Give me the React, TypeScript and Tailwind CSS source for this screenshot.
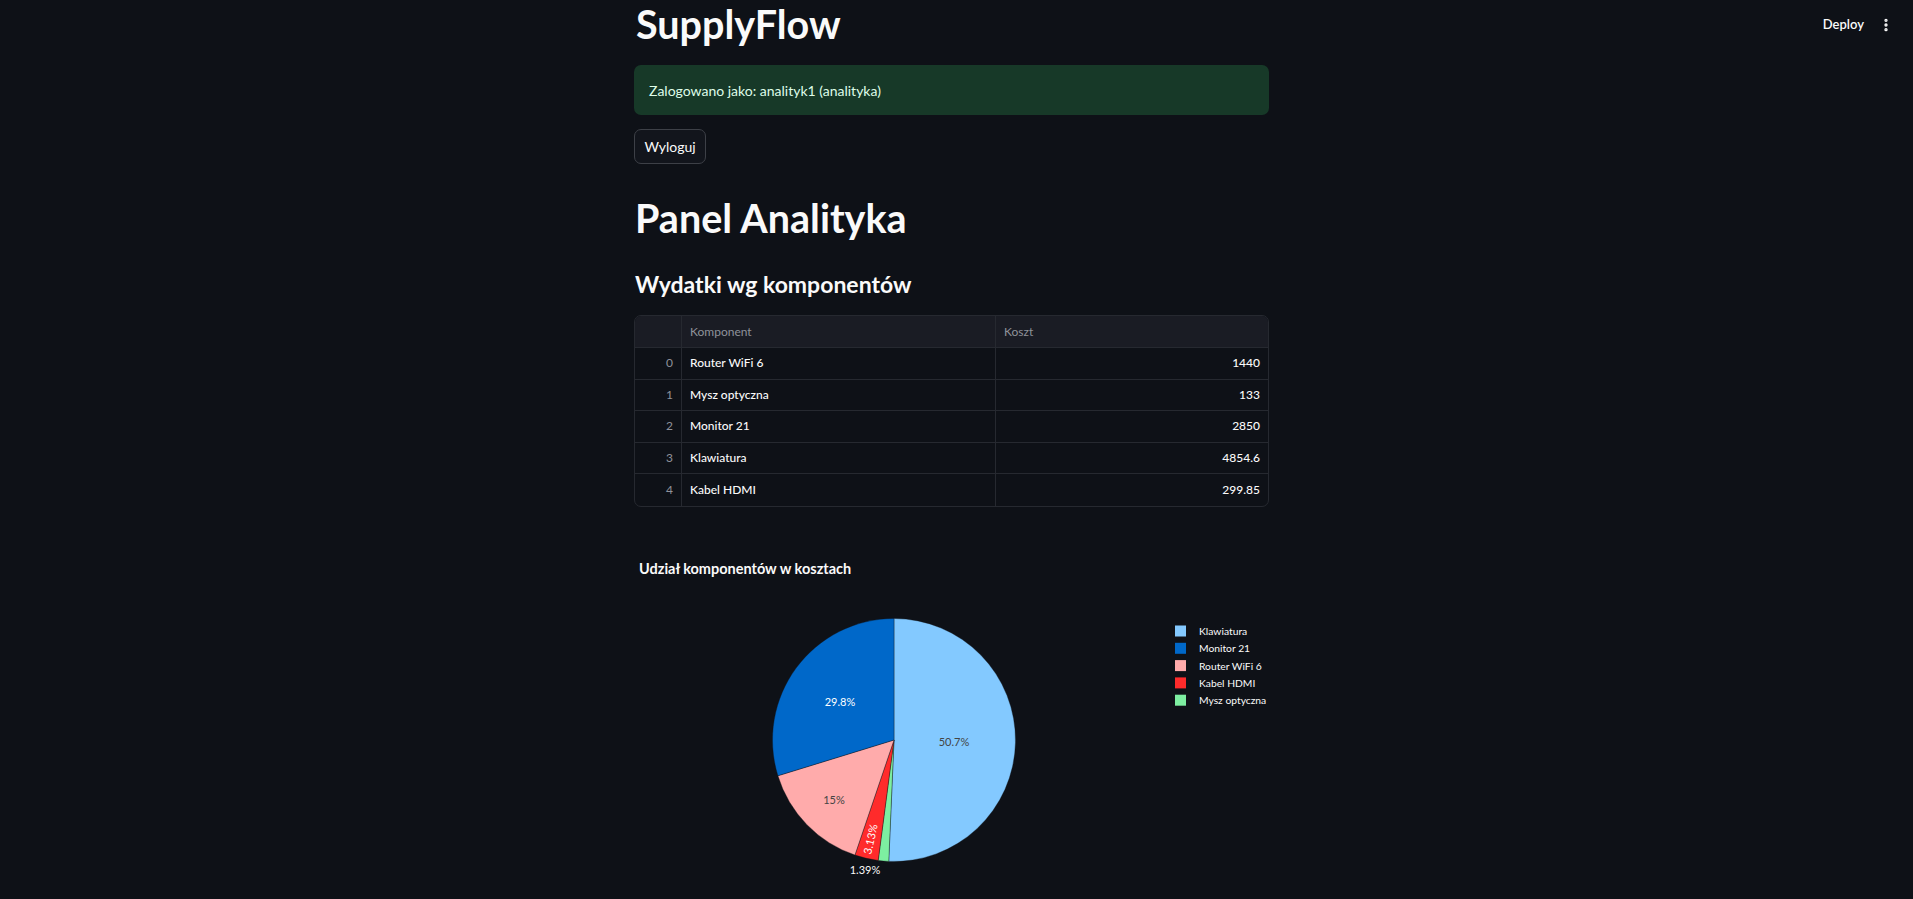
import { EllipsisVertical } from "lucide-react";

interface Row {
  idx: number;
  name: string;
  cost: string;
}

const rows: Row[] = [
  { idx: 0, name: "Router WiFi 6", cost: "1440" },
  { idx: 1, name: "Mysz optyczna", cost: "133" },
  { idx: 2, name: "Monitor 21", cost: "2850" },
  { idx: 3, name: "Klawiatura", cost: "4854.6" },
  { idx: 4, name: "Kabel HDMI", cost: "299.85" },
];

// clockwise from 12 o'clock, same order as the plot
const slices = [
  { name: "Klawiatura", value: 4854.6, color: "#83c9ff" },
  { name: "Mysz optyczna", value: 133, color: "#7defa1" },
  { name: "Kabel HDMI", value: 299.85, color: "#ff2b2b" },
  { name: "Router WiFi 6", value: 1440, color: "#ffabab" },
  { name: "Monitor 21", value: 2850, color: "#0068c9" },
];

const legend = [
  { name: "Klawiatura", color: "#83c9ff" },
  { name: "Monitor 21", color: "#0068c9" },
  { name: "Router WiFi 6", color: "#ffabab" },
  { name: "Kabel HDMI", color: "#ff2b2b" },
  { name: "Mysz optyczna", color: "#7defa1" },
];

const font = { fontFamily: "Lato, 'Noto Sans', sans-serif" };

function PieChart() {
  const cx = 260;
  const cy = 203;
  const r = 121.5;
  const total = slices.reduce((s, x) => s + x.value, 0);
  let acc = 0;
  const pt = (f: number) => {
    const a = f * Math.PI * 2;
    return [cx + r * Math.sin(a), cy - r * Math.cos(a)];
  };

  return (
    <svg width="635" height="364" viewBox="0 0 635 364" className="block overflow-visible">
      <text x="5" y="37" fill="#fafafa" fontSize="14.5" fontWeight="700" style={font}>
        Udział komponentów w kosztach
      </text>

      {slices.map((s) => {
        const f0 = acc / total;
        acc += s.value;
        const f1 = acc / total;
        const [x0, y0] = pt(f0);
        const [x1, y1] = pt(f1);
        const large = f1 - f0 > 0.5 ? 1 : 0;
        return (
          <path
            key={s.name}
            d={`M${cx},${cy} L${x0},${y0} A${r},${r} 0 ${large} 1 ${x1},${y1} Z`}
            fill={s.color}
            stroke="#0e1117"
            strokeWidth="0.6"
            strokeOpacity="0.6"
          />
        );
      })}

      <g fontSize="11" textAnchor="middle" dominantBaseline="central" style={font}>
        <text x="320" y="204" fill="#444444">50.7%</text>
        <text x="206" y="164" fill="#ffffff">29.8%</text>
        <text x="200" y="262" fill="#444444">15%</text>
        <text x="236" y="302" fill="#ffffff" transform="rotate(-77 236 302)">3.13%</text>
        <text x="231" y="332" fill="#fafafa">1.39%</text>
      </g>

      <g fontSize="10.3" style={font}>
        {legend.map((l, i) => {
          const y = 94 + i * 17.3;
          return (
            <g key={l.name}>
              <rect x="541" y={y - 5.5} width="11" height="11" fill={l.color} />
              <text x="565" y={y} dominantBaseline="central" fill="#fafafa">
                {l.name}
              </text>
            </g>
          );
        })}
      </g>
    </svg>
  );
}

export default function App() {
  return (
    <div
      className="relative h-[899px] w-full overflow-hidden bg-[#0e1117] text-[#fafafa]"
      style={font}
    >
      {/* Header */}
      <div className="absolute right-0 top-0 flex h-[50px] items-center gap-[14px] pr-[19px]">
        <span className="text-[13px] font-semibold">Deploy</span>
        <EllipsisVertical size={16} strokeWidth={3} />
      </div>

      <div className="flex justify-center pr-[10px]">
        <div className="w-[635px]">
          <h1 className="mt-[0px] h-[47px] pl-[2px] text-[39.5px] font-bold leading-[47px]">SupplyFlow</h1>

          <div className="mt-[18px] flex h-[50px] items-center rounded-[7px] bg-[#173928] px-[15px] text-[14px] text-[#dffde9]">
            Zalogowano jako: analityk1 (analityka)
          </div>

          <button className="mt-[14px] flex h-[35px] w-[72px] items-center justify-center rounded-[7px] border border-[#3d4047] bg-[#12151c] text-[14px]">
            Wyloguj
          </button>

          <h1 className="mt-[30px] h-[47px] pl-[1px] text-[39.5px] font-bold leading-[47px]">Panel Analityka</h1>

          <h3 className="mt-[28px] h-[30px] pl-[1px] text-[23px] font-bold leading-[30px]">
            Wydatki wg komponentów
          </h3>

          {/* Table */}
          <div className="mt-[16px] overflow-hidden rounded-[7px] border border-[#262930] text-[12px]">
            <div className="flex h-[32px] items-center border-b border-[#262930] bg-[#1a1c24] text-[#8f929a]">
              <div className="h-full w-[47px] border-r border-[#262930]" />
              <div className="flex h-full w-[314px] items-center border-r border-[#262930] px-[8px]">
                Komponent
              </div>
              <div className="flex h-full flex-1 items-center px-[8px]">Koszt</div>
            </div>
            {rows.map((row, i) => (
              <div
                key={row.idx}
                className={`flex h-[31.5px] items-center ${
                  i < rows.length - 1 ? "border-b border-[#262930]" : ""
                }`}
              >
                <div className="flex h-full w-[47px] items-center justify-end border-r border-[#262930] px-[8px] text-[#8f929a]">
                  {row.idx}
                </div>
                <div className="flex h-full w-[314px] items-center border-r border-[#262930] px-[8px] font-medium">
                  {row.name}
                </div>
                <div className="flex h-full flex-1 items-center justify-end px-[8px] font-medium">
                  {row.cost}
                </div>
              </div>
            ))}
          </div>

          <div className="mt-[30px]">
            <PieChart />
          </div>
        </div>
      </div>
    </div>
  );
}
